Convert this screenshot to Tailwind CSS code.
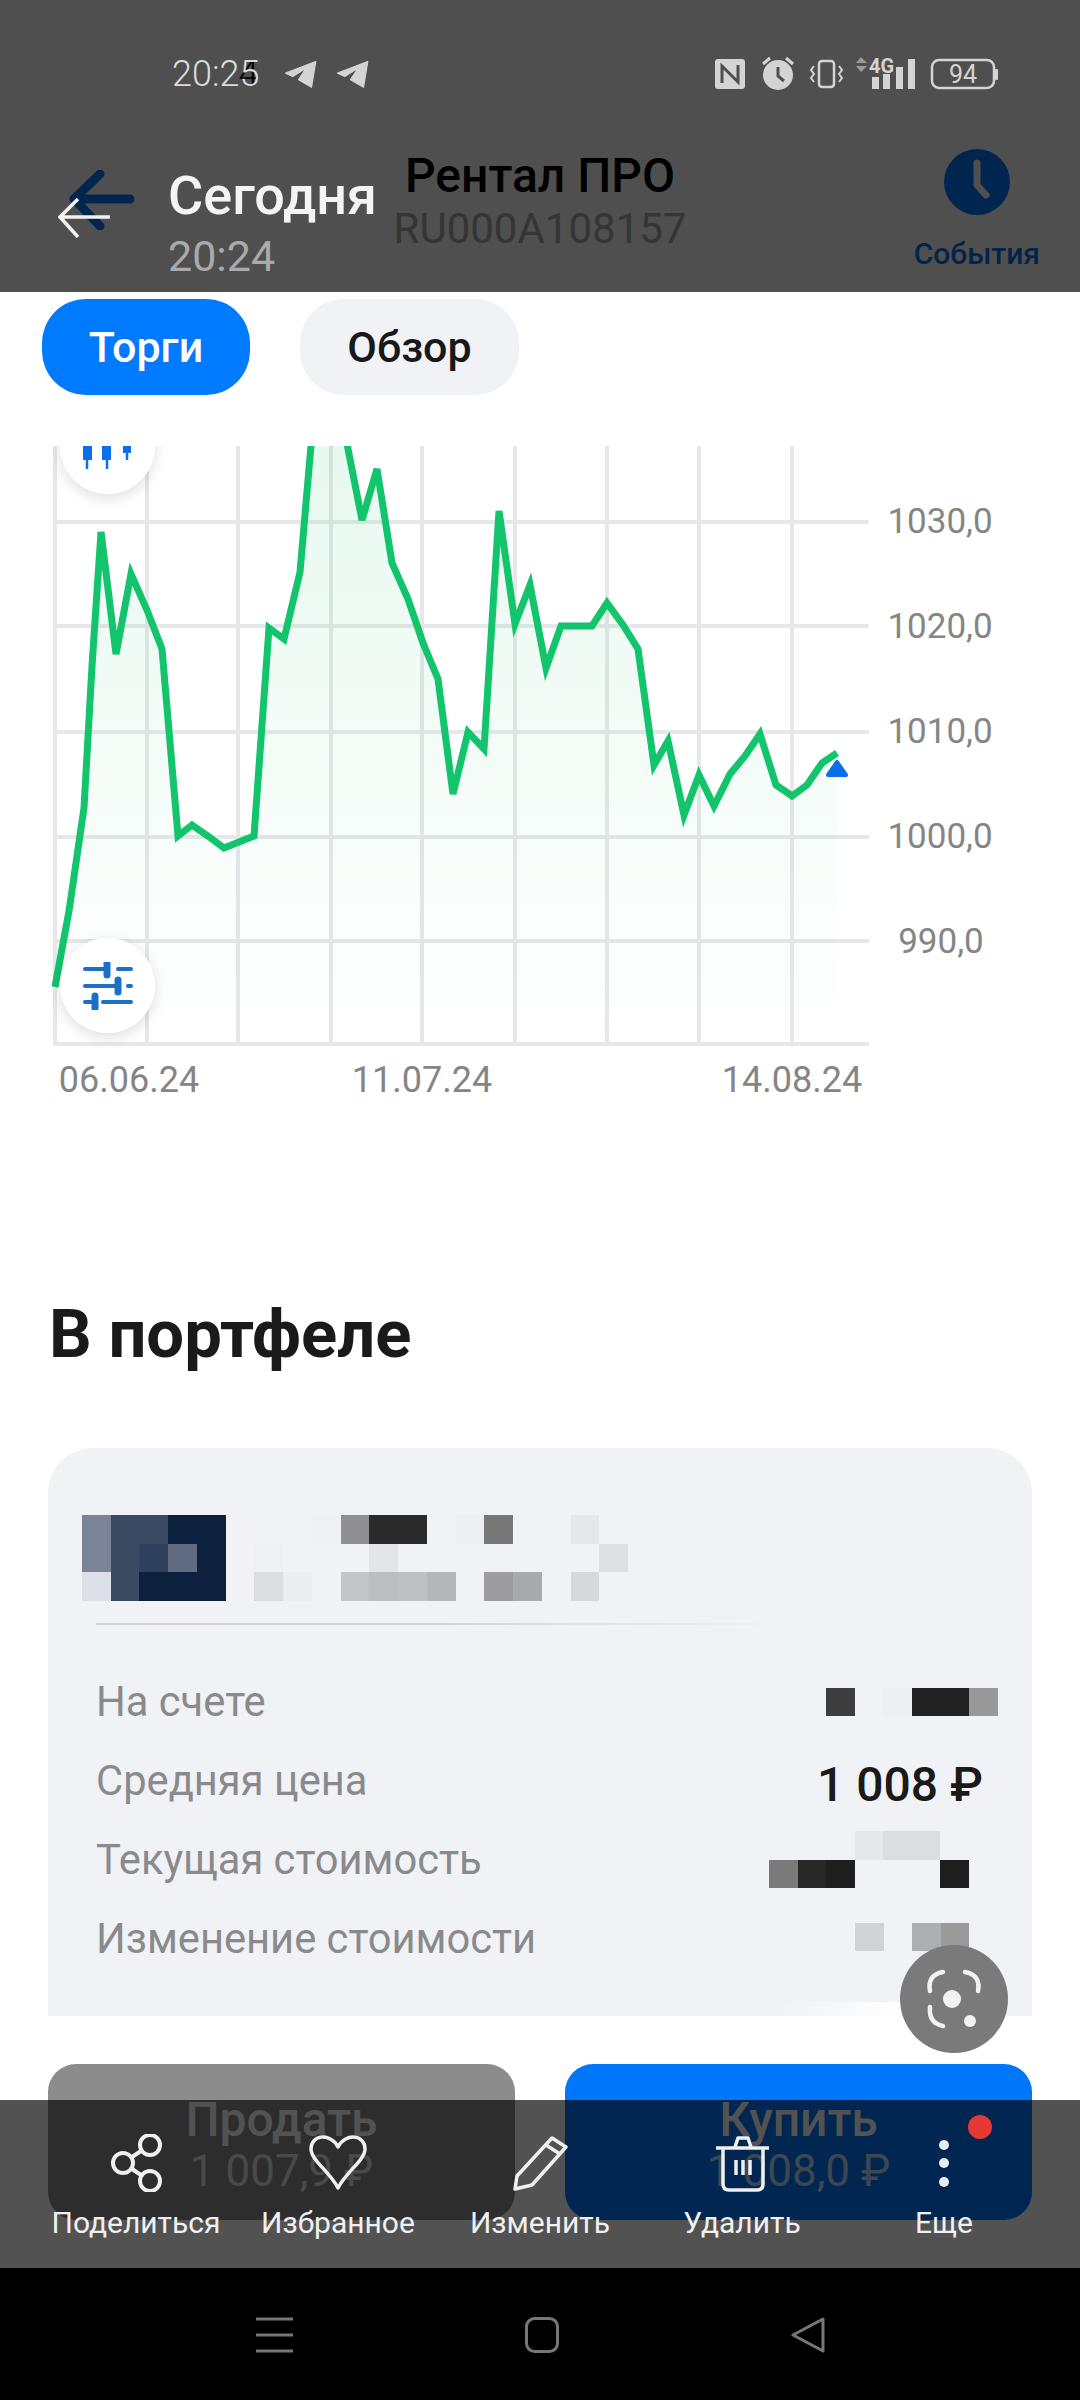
<!DOCTYPE html>
<html lang="ru">
<head>
<meta charset="UTF-8" />
<meta name="viewport" content="width=device-width, initial-scale=1.0" />
<title>Рентал ПРО</title>
<script src="https://cdn.jsdelivr.net/npm/@tailwindcss/browser@4"></script>
</head>
<body class="relative w-[1080px] h-[2400px] overflow-hidden bg-white font-[Roboto,sans-serif]">

<!-- page under the dimmed bars -->
<header class="grid grid-cols-[1fr_auto_1fr] h-[292px] pt-[148px]">
  <div class="pl-[69px] pt-[22px]">
    <svg class="w-[66px] h-[60px]" viewBox="69 170 66 60" fill="none" stroke="#007aff" stroke-width="9" stroke-linecap="round" stroke-linejoin="round"><path d="M130 199H74M100 174 L74 199 L100 226"/></svg>
  </div>
  <div class="flex flex-col items-center">
    <div class="text-[48px] leading-[56px] font-medium text-black">Рентал ПРО</div>
    <div class="text-[42px] leading-[50px] text-[#aaaaaa]">RU000A108157</div>
  </div>
  <div class="flex flex-col items-end pr-[40px]">
    <div class="flex flex-col items-center">
      <svg class="w-[66px] h-[66px] mt-[1px]" viewBox="0 0 66 66"><circle cx="33" cy="33" r="33" fill="#007aff"/><path d="M33 14V36L42 46" fill="none" stroke="#fff" stroke-width="7" stroke-linecap="round" stroke-linejoin="round"/></svg>
      <div class="text-[30px] leading-[36px] font-medium text-[#0a76e8] mt-[21px]">События</div>
    </div>
  </div>
</header>

<nav class="flex gap-[50px] pl-[42px] pt-[7px]">
  <div class="flex items-center justify-center w-[208px] h-[96px] rounded-[44px] bg-[#007aff] text-white text-[43px] font-medium">Торги</div>
  <div class="flex items-center justify-center w-[219px] h-[96px] rounded-[44px] bg-[#f1f2f6] text-[#17181a] text-[43px] font-medium">Обзор</div>
</nav>

<!-- chart -->
<section class="relative h-[654px] mt-[51px] overflow-hidden">
  <svg class="w-[1080px] h-[654px]" viewBox="0 446 1080 654" fill="none">
    <defs>
      <linearGradient id="area" x1="0" y1="0" x2="0" y2="1">
        <stop offset="0" stop-color="#19c46c" stop-opacity="0.11"/>
        <stop offset="1" stop-color="#19c46c" stop-opacity="0"/>
      </linearGradient>
    </defs>
    <g stroke="#e6e7e9" stroke-width="4">
      <path d="M55 446V1046M147 446V1046M238 446V1046M331 446V1046M422 446V1046M515 446V1046M607 446V1046M699 446V1046M792 446V1046"/>
      <path d="M55 522H869M55 626H869M55 732H869M55 837H869M55 941H869M55 1044H869"/>
    </g>
    <path fill="url(#area)" d="M55 987 69 911 84 808 92 666 101 532 116 654 131 574 147 610 162 649 178 836 192 825 208 836 224 848 239 842 254 836 269 628 284 639 300 572 316 388 336 388 362 520 377 469 392 563 408 599 423 643 438 679 453 794 468 732 484 749 499 511 515 624 530 585 546 668 561 626 576 626 592 626 607 603 623 625 638 649 654 765 668 741 684 815 699 775 714 806 730 774 745 756 760 734 776 785 792 796 807 785 822 763 837 753V1044H55Z"/>
    <polyline stroke="#12c46b" stroke-width="7" stroke-linejoin="miter" points="55,987 69,911 84,808 92,666 101,532 116,654 131,574 147,610 162,649 178,836 192,825 208,836 224,848 239,842 254,836 269,628 284,639 300,572 316,388 336,388 362,520 377,469 392,563 408,599 423,643 438,679 453,794 468,732 484,749 499,511 515,624 530,585 546,668 561,626 576,626 592,626 607,603 623,625 638,649 654,765 668,741 684,815 699,775 714,806 730,774 745,756 760,734 776,785 792,796 807,785 822,763 837,753"/>
    <path d="M837 762 L846 775 H828 Z" fill="#0a6fe8" stroke="#0a6fe8" stroke-width="4" stroke-linejoin="round"/>
    <g fill="#858585" font-size="35" text-anchor="middle">
      <text x="940" y="533">1030,0</text>
      <text x="940" y="638">1020,0</text>
      <text x="940" y="743">1010,0</text>
      <text x="940" y="848">1000,0</text>
      <text x="941" y="953">990,0</text>
    </g>
    <g fill="#858585" font-size="36" text-anchor="middle">
      <text x="129" y="1092">06.06.24</text>
      <text x="422" y="1092">11.07.24</text>
      <text x="792" y="1092">14.08.24</text>
    </g>
  </svg>
  <div class="absolute left-[60px] top-[-47px] w-[95px] h-[95px] rounded-full bg-white shadow-[0_4px_14px_rgba(0,0,0,0.13)] flex items-end justify-center">
    <svg class="w-[50px] h-[24px] mb-[24px]" viewBox="84 446 50 24" fill="none"><path d="M88 446V469M108 446V469M128 446V460" stroke="#0a6fe8" stroke-width="2.5"/><path d="M84 446H93V460H84ZM103 446H112V460H103ZM124 446H132V453H124Z" fill="#0a6fe8"/></svg>
  </div>
  <div class="absolute left-[60px] top-[492px] w-[95px] h-[95px] rounded-full bg-white shadow-[0_4px_14px_rgba(0,0,0,0.13)] flex items-center justify-center">
    <svg class="w-[50px] h-[48px]" viewBox="83 963 50 48" fill="none" stroke="#1a6fc9" stroke-width="4" stroke-linecap="round"><path d="M85 970H106M118 970H131"/><path d="M107 964V976" stroke-width="7"/><path d="M85 987H118M128 987H131"/><path d="M118 981V993" stroke-width="7"/><path d="M85 1003H92M103 1003H131"/><path d="M95 997V1009" stroke-width="7"/></svg>
  </div>
</section>

<h2 class="mt-[198px] pl-[49px] text-[67px] leading-[72px] font-bold text-[#1a1a1a]">В портфеле</h2>

<!-- portfolio card -->
<section class="relative mx-[48px] mt-[78px] h-[568px] rounded-t-[45px] bg-[#f0f2f6]">
  <div class="pt-[67px] pl-[34px]">
    <svg class="w-[546px] h-[86px]" viewBox="0 0 19 3" preserveAspectRatio="none" shape-rendering="crispEdges">
      <rect x="0" y="0" width="1" height="2" fill="#7a8496"/><rect x="1" y="0" width="2" height="1" fill="#3a4a63"/><rect x="3" y="0" width="2" height="1" fill="#0d213f"/>
      <rect x="8" y="0" width="1" height="1" fill="#eef0f3"/><rect x="9" y="0" width="1" height="1" fill="#8f8f91"/><rect x="10" y="0" width="2" height="1" fill="#2a2a2a"/>
      <rect x="13" y="0" width="1" height="1" fill="#eceef1"/><rect x="14" y="0" width="1" height="1" fill="#777777"/><rect x="17" y="0" width="1" height="1" fill="#e6e7ea"/>
      <rect x="1" y="1" width="1" height="1" fill="#3a4a63"/><rect x="2" y="1" width="1" height="1" fill="#2f415c"/><rect x="3" y="1" width="1" height="1" fill="#5e6b80"/><rect x="4" y="1" width="1" height="1" fill="#0d213f"/>
      <rect x="6" y="1" width="1" height="1" fill="#eff0f3"/><rect x="10" y="1" width="1" height="1" fill="#e4e5e8"/><rect x="18" y="1" width="1" height="1" fill="#dedfe2"/>
      <rect x="0" y="2" width="1" height="1" fill="#dde1e7"/><rect x="1" y="2" width="1" height="1" fill="#3a4a63"/><rect x="2" y="2" width="3" height="1" fill="#0d213f"/>
      <rect x="6" y="2" width="1" height="1" fill="#dcdde0"/><rect x="7" y="2" width="1" height="1" fill="#ecedf0"/><rect x="9" y="2" width="1" height="1" fill="#c4c5c7"/><rect x="10" y="2" width="1" height="1" fill="#bcbdc0"/><rect x="11" y="2" width="1" height="1" fill="#bfc0c3"/><rect x="12" y="2" width="1" height="1" fill="#b6b7b9"/>
      <rect x="14" y="2" width="1" height="1" fill="#9d9d9f"/><rect x="15" y="2" width="1" height="1" fill="#a9aaac"/><rect x="17" y="2" width="1" height="1" fill="#d8d9dc"/>
    </svg>
  </div>
  <div class="ml-[48px] mt-[22px] w-[690px] h-[2px] bg-gradient-to-r from-[#d4d5d8] via-[#d4d5d8] to-[#f0f2f6]"></div>
  <div class="flex flex-col pl-[48px] pr-[34px] mt-[38px] text-[41.7px] text-[#8a8a8c]">
    <div class="flex items-center justify-between h-[79px]">
      <span>На счете</span>
      <svg class="w-[172px] h-[28px] -mt-[2px]" viewBox="0 0 6 1" preserveAspectRatio="none" shape-rendering="crispEdges"><rect x="0" width="1" height="1" fill="#3d3d3d"/><rect x="2" width="1" height="1" fill="#eeeff2"/><rect x="3" width="2" height="1" fill="#222222"/><rect x="5" width="1" height="1" fill="#999999"/></svg>
    </div>
    <div class="flex items-center justify-between h-[79px]">
      <span>Средняя цена</span>
      <span class="mr-[15px] mt-[6px] text-[48px] font-medium text-[#1a1a1a]">1 008 ₽</span>
    </div>
    <div class="flex items-center justify-between h-[79px]">
      <span>Текущая стоимость</span>
      <svg class="w-[200px] h-[57px] mr-[29px] -mt-[3px]" viewBox="0 0 7 2" preserveAspectRatio="none" shape-rendering="crispEdges"><rect x="3" y="0" width="1" height="1" fill="#e6e7ea"/><rect x="4" y="0" width="2" height="1" fill="#dcdde1"/><rect x="0" y="1" width="1" height="1" fill="#7a7a7a"/><rect x="1" y="1" width="1" height="1" fill="#272727"/><rect x="2" y="1" width="1" height="1" fill="#1e1e1e"/><rect x="6" y="1" width="1" height="1" fill="#1e1e1e"/></svg>
    </div>
    <div class="flex items-center justify-between h-[79px]">
      <span>Изменение стоимости</span>
      <svg class="w-[114px] h-[28px] mr-[29px] -mt-[6px]" viewBox="0 0 4 1" preserveAspectRatio="none" shape-rendering="crispEdges"><rect x="0" width="1" height="1" fill="#d2d3d6"/><rect x="2" width="1" height="1" fill="#adaeb0"/><rect x="3" width="1" height="1" fill="#9a9a9b"/></svg>
    </div>
  </div>
  <div class="absolute right-[130px] bottom-0 w-[130px] h-[14px] bg-gradient-to-r from-[#f0f2f6] to-white"></div>
</section>

<!-- order buttons -->
<div class="grid grid-cols-2 gap-[50px] mx-[48px] mt-[48px]">
  <div class="flex flex-col items-center h-[156px] pt-[30px] rounded-[28px] bg-[#8c8c8c] text-white">
    <div class="text-[48px] leading-[52px] font-medium">Продать</div>
    <div class="text-[44px] leading-[48px] mt-[1px] text-white/75">1 007,9 ₽</div>
  </div>
  <div class="flex flex-col items-center h-[156px] pt-[30px] rounded-[28px] bg-[#0076fb] text-white">
    <div class="text-[48px] leading-[52px] font-medium">Купить</div>
    <div class="text-[44px] leading-[48px] mt-[1px] text-white/75">1 008,0 ₽</div>
  </div>
</div>

<!-- floating lens button -->
<div class="absolute left-[900px] top-[1945px] w-[108px] h-[108px] rounded-full bg-[#7a7a7a] flex items-center justify-center">
  <svg class="w-[60px] h-[64px]" viewBox="0 0 60 64" fill="none" stroke="#f2f2f2" stroke-width="4.5" stroke-linecap="round"><path d="M6 24C4 14 8 7 19 5M41 5C52 7 56 14 54 24M6 40C5 50 9 57 19 59"/><circle cx="28" cy="32" r="9" fill="#f2f2f2" stroke="none"/><circle cx="46" cy="54" r="6" fill="#f2f2f2" stroke="none"/></svg>
</div>

<!-- dimmed top bar -->
<div class="absolute top-0 left-0 w-full h-[292px] bg-black/[0.69]">
  <div class="flex items-center justify-between h-[40px] mt-[54px] pl-[172px] pr-[81px]">
    <div class="flex items-center">
      <span class="relative text-[36px] leading-[40px] font-light text-[#dcdcdc]">20:25<span class="absolute right-[1px] top-0 -z-10 text-black">4</span></span>
      <svg class="w-[33px] h-[29px] ml-[25px]" viewBox="405 88 102 88"><path d="M410 128 503 92 490 171 450 148 474 112 432 138Z" fill="#d4d4d4" stroke="#d4d4d4" stroke-width="4" stroke-linejoin="round"/></svg>
      <svg class="w-[33px] h-[29px] ml-[19px]" viewBox="405 88 102 88"><path d="M410 128 503 92 490 171 450 148 474 112 432 138Z" fill="#d4d4d4" stroke="#d4d4d4" stroke-width="4" stroke-linejoin="round"/></svg>
    </div>
    <svg class="w-[284px] h-[40px]" viewBox="716 52 284 40" fill="none">
      <rect x="716" y="57" width="30" height="30" rx="3" fill="#d4d4d4"/>
      <path d="M723 81V64L739 80V63" stroke="#4f4f4f" stroke-width="3"/>
      <circle cx="779" cy="73" r="15" fill="#d4d4d4"/>
      <path d="M779 65V74L785 79" stroke="#4f4f4f" stroke-width="3"/>
      <path d="M764 62 771 56M794 62 787 56" stroke="#d4d4d4" stroke-width="3"/>
      <rect x="820" y="59" width="15" height="26" rx="3" stroke="#d4d4d4" stroke-width="2.5"/>
      <path d="M815 64 812 68 815 72 812 76 815 80M840 64 843 68 840 72 843 76 840 80" stroke="#d4d4d4" stroke-width="2"/>
      <path d="M857 61 862 55 868 61ZM857 64 862 70 868 64Z" fill="#9a9a9a"/>
      <text x="870" y="71" font-size="20" font-weight="700" fill="#d4d4d4">4G</text>
      <path d="M873 75H880V87H873ZM884 72H891V87H884ZM897 65H904V87H897ZM909 57H916V87H909Z" fill="#d4d4d4"/>
      <rect x="933" y="58" width="62" height="28" rx="7" stroke="#d4d4d4" stroke-width="2.5"/>
      <rect x="996" y="67" width="3" height="11" rx="1" fill="#d4d4d4"/>
      <text x="964" y="81" font-size="25" text-anchor="middle" fill="#d4d4d4">94</text>
    </svg>
  </div>
  <div class="flex items-start pl-[58px] mt-[80px]">
    <svg class="w-[52px] h-[40px] mt-[24px]" viewBox="58 198 52 40" fill="none" stroke="#f2f2f2" stroke-width="3.5"><path d="M110 217H60M78 199 60 217 78 237"/></svg>
    <div class="ml-[58px] -mt-[8px]">
      <div class="text-[54px] leading-[60px] font-medium text-[#f4f4f4]">Сегодня</div>
      <div class="text-[43px] leading-[48px] text-[#aaaaaa] mt-[6px]">20:24</div>
    </div>
  </div>
</div>

<!-- dimmed action bar and system navigation -->
<div class="absolute bottom-0 left-0 w-full">
  <div class="grid grid-cols-5 h-[168px] px-[35px] pt-[34px] bg-black/[0.68] text-[#f0f0f0] text-[30px] leading-[36px]">
    <div class="flex flex-col items-center">
      <svg class="w-[58px] h-[58px]" viewBox="107 2134 58 58" fill="none" stroke="currentColor" stroke-width="4"><circle cx="150" cy="2145" r="10"/><circle cx="123" cy="2163" r="10"/><circle cx="150" cy="2181" r="10"/><path d="M141 2151 132 2157M132 2169 141 2175"/></svg>
      <span class="mt-[13px]">Поделиться</span>
    </div>
    <div class="flex flex-col items-center">
      <svg class="w-[58px] h-[58px]" viewBox="310 2134 58 58" fill="none" stroke="currentColor" stroke-width="3.5" stroke-linejoin="round"><path d="M339 2188C331 2172 312 2160 312 2149C312 2134 332 2133 339 2147C346 2133 366 2134 366 2149C366 2160 347 2172 339 2188Z"/></svg>
      <span class="mt-[13px]">Избранное</span>
    </div>
    <div class="flex flex-col items-center">
      <svg class="w-[58px] h-[58px]" viewBox="511 2134 58 58" fill="none" stroke="currentColor" stroke-width="3.5" stroke-linejoin="round"><path d="M515 2189 517 2176 552 2138 566 2147 532 2185ZM546 2145 560 2154"/></svg>
      <span class="mt-[13px]">Изменить</span>
    </div>
    <div class="flex flex-col items-center">
      <svg class="w-[58px] h-[58px]" viewBox="712 2134 58 58" fill="none" stroke="currentColor" stroke-width="3.5" stroke-linejoin="round"><path d="M715 2148H768M734 2147 737 2138H747L750 2147M722 2148V2184Q722 2190 728 2190H756Q762 2190 762 2184V2148M735 2160V2175M742 2160V2175M749 2160V2175"/></svg>
      <span class="mt-[13px]">Удалить</span>
    </div>
    <div class="flex flex-col items-center">
      <svg class="w-[58px] h-[58px] overflow-visible" viewBox="914 2134 58 58"><circle cx="979" cy="2127" r="12" fill="#e53935"/><g fill="#e8edf2"><circle cx="943" cy="2145" r="5"/><circle cx="943" cy="2163" r="5"/><circle cx="943" cy="2182" r="5"/></g></svg>
      <span class="mt-[13px]">Еще</span>
    </div>
  </div>
  <div class="flex h-[132px] gap-[232px] pl-[256px] pt-[49px] bg-black">
    <svg class="w-[37px] h-[36px]" viewBox="0 0 37 36"><path d="M0 2H37M0 18H37M0 34H37" stroke="#757575" stroke-width="3"/></svg>
    <svg class="w-[34px] h-[36px]" viewBox="0 0 34 36" fill="none"><rect x="1.5" y="1.5" width="31" height="33" rx="8" stroke="#777777" stroke-width="3"/></svg>
    <svg class="w-[34px] h-[36px]" viewBox="0 0 34 36" fill="none"><path d="M32 2 2 18 32 34Z" stroke="#777777" stroke-width="3" stroke-linejoin="round"/></svg>
  </div>
</div>

</body>
</html>
